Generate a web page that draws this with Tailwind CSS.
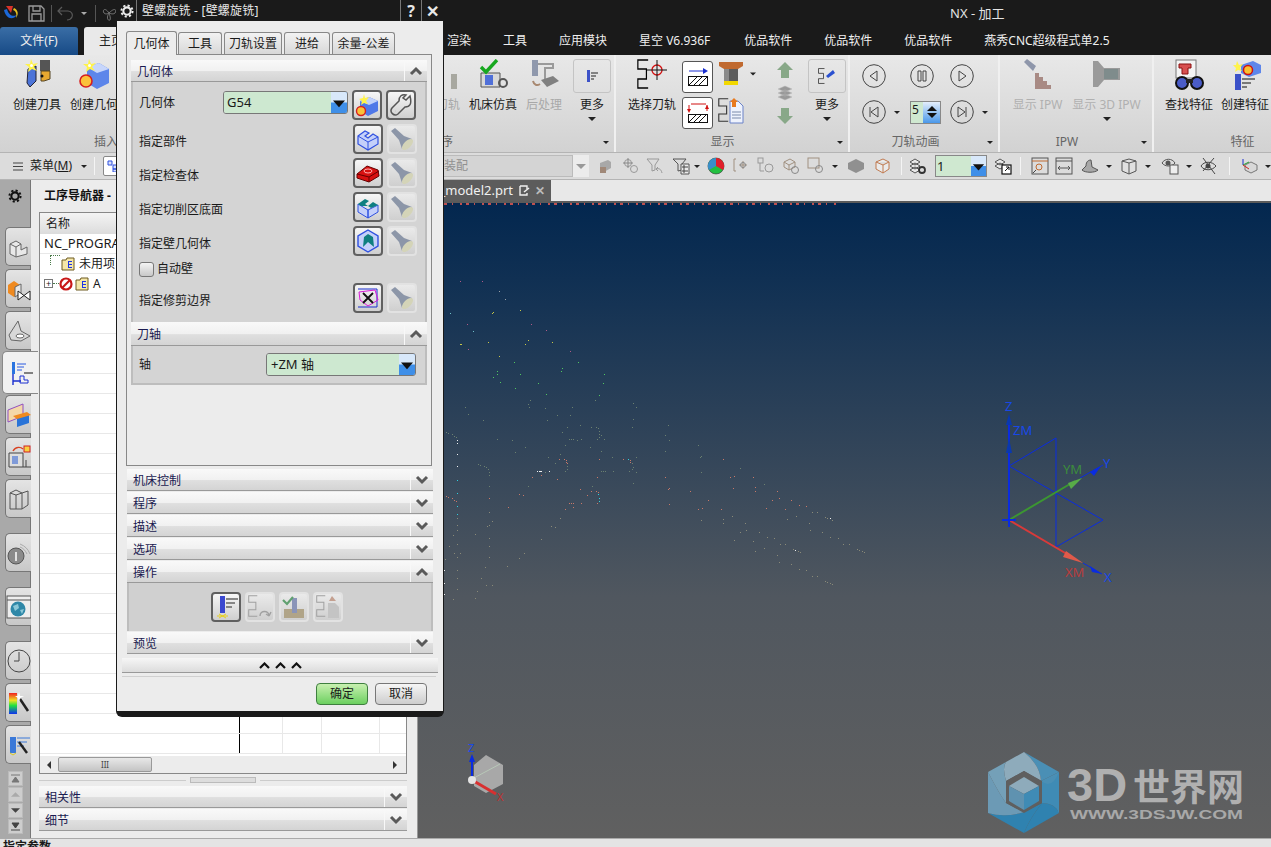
<!DOCTYPE html>
<html lang="zh">
<head>
<meta charset="UTF-8">
<title>NX - 加工</title>
<script src="https://cdn.jsdelivr.net/npm/@tailwindcss/browser@4"></script>
</head>
<body class="bg-[#1a1a1a] font-['Noto_Sans','Noto_Sans_CJK_SC',sans-serif] text-[12px] leading-none text-[#1a1a1a]">

<!-- shared icons -->
<svg class="hidden">
  <symbol id="torch" viewBox="0 0 24 24"><path d="M1 4L5 1L14 9L22 12L12 22L9 13Z" fill="#8c96a8"/><ellipse cx="17.500" cy="17.500" rx="7" ry="3.500" transform="rotate(-45 17.500 17.500)" fill="#d4d4b8"/></symbol>
  <symbol id="slot" viewBox="0 0 24 24"><path d="M2 9L9 4L13 6L9 9L12 11L17 7L22 10V17L12 23L2 17Z" fill="#c4d0fa" stroke="#2f50e0" stroke-width="1.2"/><path d="M2 9L12 15L22 10M12 15V23" fill="none" stroke="#2f50e0"/></symbol>
  <symbol id="slotg" viewBox="0 0 24 24"><path d="M2 9L12 15V23L2 17ZM12 15L22 10V17L12 23Z" fill="#c4d0fa" stroke="#2f50e0"/><path d="M2 9L9 4L13 6L9 9L12 11L5 11ZM12 11L17 7L22 10L15 13Z" fill="#0f7f80"/></symbol>
  <symbol id="wall" viewBox="0 0 24 24"><path d="M12 1L22 7V17L12 23L2 17V7Z" fill="#c4d0fa" stroke="#2f50e0" stroke-width="1.4"/><path d="M7 18L8 8L12 5L17 8L18 18L12 13Z" fill="#0f7f80"/></symbol>
  <symbol id="down" viewBox="0 0 16 22"><rect width="16" height="22" fill="#3f8fe8"/><rect width="16" height="11" fill="#d8e8fa"/><path d="M2 9H14L8 16Z" fill="#111"/></symbol>
  <symbol id="chevd" viewBox="0 0 14 10"><path d="M2 2L7 7L12 2" fill="none" stroke="#5a5a5a" stroke-width="3"/></symbol>
  <symbol id="chevu" viewBox="0 0 14 10"><path d="M2 8L7 3L12 8" fill="none" stroke="#5a5a5a" stroke-width="3"/></symbol>
  <symbol id="gear" viewBox="0 0 16 16"><circle cx="8" cy="8" r="4.2" fill="none" stroke="currentColor" stroke-width="2.4"/><circle cx="8" cy="8" r="6.4" fill="none" stroke="currentColor" stroke-width="2.2" stroke-dasharray="2.5 2.5"/></symbol>
  <symbol id="caret" viewBox="0 0 8 4"><path d="M0 0H8L4 4Z" fill="#222"/></symbol>
  <symbol id="folder" viewBox="0 0 14 14"><path d="M1 3H5L6 1H13V13H1Z" fill="#f4e6a8" stroke="#6d5a20"/><path d="M7 4H11V5H8V7H11V8H8V10H11V11H7Z" fill="#1b34e6"/></symbol>
  <symbol id="zigzag" viewBox="0 0 14 30" preserveAspectRatio="none"><path d="M13 1H1V10H11V20H1V29H13" fill="none" stroke="currentColor" stroke-width="1.4"/></symbol>
</svg>

<div class="relative flex h-[847px] w-[1271px] flex-col overflow-hidden">

  <!-- title bar -->
  <div class="flex h-[27px] shrink-0 items-center bg-[#1a1a1a]">
    <svg class="ml-[3px] size-[17px]" viewBox="0 0 17 17"><path d="M1 5C3 14 10 16 15 9C12 12 6 12 4 4Z" fill="#1c68d8"/><path d="M3 1L10 1L8 8Z" fill="#d8332a"/><path d="M11 3C15 5 16 9 13 13C14 9 13 6 10 5Z" fill="#e8c020"/></svg>
    <svg class="ml-[8px] size-[17px]" viewBox="0 0 17 17"><path d="M1 1H13L16 4V16H1ZM5 1V6H12V1M4 16V9H13V16" fill="none" stroke="#9a9a9a" stroke-width="1.3"/></svg>
    <div class="ml-[6px] h-[17px] w-px bg-[#555]"></div>
    <svg class="ml-[5px] size-[17px]" viewBox="0 0 17 17"><path d="M5 2L1 6L5 10M1 6H11C15 6 16 10 15 12C14 14 12 15 10 15" fill="none" stroke="#5a5a5a" stroke-width="1.2"/></svg>
    <svg class="ml-[7px] h-[3px] w-[6px]" viewBox="0 0 8 4"><path d="M0 0H8L4 4Z" fill="#aaa"/></svg>
    <div class="ml-[8px] h-[17px] w-px bg-[#555]"></div>
    <svg class="ml-[5px] size-[17px]" viewBox="0 0 17 17"><path d="M8 8C4 2 1 5 3 8C5 10 8 8 8 8C14 2 16 5 14 8C12 10 8 8 8 8C5 13 7 16 9 15C10 13 8 8 8 8" fill="none" stroke="#777"/></svg>
    <span class="ml-[832px] text-[13px] text-[#e4e4e4]">NX - 加工</span>
  </div>

  <!-- ribbon tabs -->
  <div class="flex h-[28px] shrink-0 items-center bg-[#1a1a1a] text-[#efefef]">
    <div class="flex h-full w-[78px] items-center justify-center rounded-t-[3px] bg-[linear-gradient(#3a6ea6,#174a86)]">文件(F)</div>
    <div class="ml-[6px] flex h-full w-[60px] items-center rounded-t-[3px] bg-[#e9e9e9] pl-[15px] text-[#222]">主页</div>
    <span class="ml-[303px]">渲染</span>
    <span class="ml-[32px]">工具</span>
    <span class="ml-[32px]">应用模块</span>
    <span class="ml-[32px]">星空 V6.936F</span>
    <span class="ml-[34px]">优品软件</span>
    <span class="ml-[32px]">优品软件</span>
    <span class="ml-[32px]">优品软件</span>
    <span class="ml-[32px]">燕秀CNC超级程式单2.5</span>
  </div>

  <!-- ribbon -->
  <div class="flex h-[97px] shrink-0 bg-[linear-gradient(#e8e8e8,#d2d2d2)]">
    <!-- insert / program group -->
    <div class="flex w-[616px] flex-col border-r-2 border-[#f0f0f0]">
      <div class="flex h-[77px]">
        <div class="ml-[13px] flex w-[48px] flex-col items-center pt-[4px]">
          <svg class="size-[30px]" viewBox="0 0 30 30"><path d="M6 10L14 7L14 22L8 28L5 24Z" fill="#4c74d8" stroke="#223"/><path d="M18 1H28V20H22V12H18Z" fill="#555"/><path d="M19 12H28V20L22 22H19Z" fill="#e8a830" stroke="#542"/><circle cx="20" cy="17" r="1.5" fill="#111"/><path d="M9 0L11 5L16 4L12 8L15 12L10 10L6 13L7 8L3 5L8 5Z" fill="#fff34a"/><circle cx="9.500" cy="6.500" r="1.500" fill="#fff"/></svg>
          <span class="mt-[10px] whitespace-nowrap">创建刀具</span>
        </div>
        <div class="ml-[9px] flex w-[48px] flex-col items-center pt-[4px]">
          <svg class="size-[30px]" viewBox="0 0 30 30"><path d="M8 8L20 4L30 10V24L18 30L8 24Z" fill="#5d86ea"/><path d="M8 8L20 4L30 10L18 14Z" fill="#c7d6fb"/><circle cx="7" cy="22" r="6" fill="#fbc23a" stroke="#d61f1f" stroke-width="1.6"/><path d="M10 0L12 5L17 4L13 8L16 12L11 10L7 13L8 8L4 5L9 5Z" fill="#fff34a"/><circle cx="10.500" cy="6.500" r="1.500" fill="#fff"/></svg>
          <span class="mt-[10px] whitespace-nowrap">创建几何</span>
        </div>
        <div class="ml-[294px] flex w-[48px] flex-col items-center pt-[4px] text-[#a8a8a8]">
          <svg class="size-[30px] overflow-visible" viewBox="0 0 30 30"><path d="M30 15H36V30H30Z" fill="#a8a8a0"/></svg>
          <span class="mt-[10px] whitespace-nowrap">确认刀轨</span>
        </div>
        <div class="ml-[9px] flex w-[48px] flex-col items-center pt-[4px]">
          <svg class="size-[30px]" viewBox="0 0 30 30"><path d="M3 14H22V28H3Z" fill="#d8d8d8" stroke="#555"/><path d="M7 16H15V26H7Z" fill="#4f6fd8"/><circle cx="25" cy="24" r="4" fill="none" stroke="#555" stroke-width="2"/><path d="M3 8L8 13L19 1" fill="none" stroke="#17a81f" stroke-width="3.4"/></svg>
          <span class="mt-[10px] whitespace-nowrap">机床仿真</span>
        </div>
        <div class="ml-[9px] flex w-[36px] flex-col items-center pt-[4px] text-[#a8a8a8]">
          <svg class="size-[30px]" viewBox="0 0 30 30"><path d="M3 1H9V17H3Z" fill="#8f98ac"/><path d="M9 5H24V9H16V22" fill="none" stroke="#9a9a9a" stroke-width="2"/><path d="M12 21L24 17L30 22L18 28Z" fill="#808080"/><path d="M4 22C5 26 8 27 11 25" fill="none" stroke="#a88870" stroke-width="2"/></svg>
          <span class="mt-[10px] whitespace-nowrap">后处理</span>
        </div>
        <div class="ml-[11px] flex w-[38px] flex-col items-center pt-[4px]">
          <div class="flex h-[34px] w-[38px] items-center justify-center rounded-[3px] border border-[#c4c4c4]">
            <svg class="size-[16px]" viewBox="0 0 16 16"><path d="M3 2H6V14H3Z" fill="#3d52c8"/><path d="M7 5H14M7 8H12M7 11H10" stroke="#222" stroke-width="1.2"/></svg>
          </div>
          <span class="mt-[6px]">更多</span>
          <svg class="mt-[6px] h-[4px] w-[8px]"><use href="#caret"/></svg>
        </div>
      </div>
      <div class="relative flex h-[20px] items-center text-[#666]">
        <span class="ml-[94px]">插入</span>
        <span class="ml-[323px]">序</span>
        <svg class="absolute right-[5px] h-[3px] w-[6px]"><use href="#caret"/></svg>
      </div>
    </div>
    <!-- display group -->
    <div class="relative flex w-[234px] flex-col border-r-2 border-[#f0f0f0]">
      <div class="flex h-[77px]">
        <div class="ml-[12px] flex w-[48px] flex-col items-center pt-[4px]">
          <svg class="size-[30px] text-black" viewBox="0 0 30 30"><use href="#zigzag" width="12" height="30"/><circle cx="20" cy="11" r="5" fill="none" stroke="#d21010" stroke-width="1.3"/><path d="M10 11H30M20 1V21" stroke="#111"/></svg>
          <span class="mt-[10px] whitespace-nowrap">选择刀轨</span>
        </div>
        <div class="ml-[6px] flex flex-col gap-[4px] pt-[6px]">
          <div class="flex h-[32px] w-[31px] items-center justify-center rounded-[3px] border border-[#555] bg-white">
            <svg class="size-[24px]" viewBox="0 0 24 24"><path d="M3 6H19" stroke="#1a2fd0"/><path d="M17 3L22 6L17 9Z" fill="#1a2fd0"/><rect x="2.5" y="11.5" width="19" height="9" fill="none" stroke="#111"/><path d="M3 20L11 12M8 20L16 12M13 20L21 12" stroke="#111"/></svg>
          </div>
          <div class="flex h-[32px] w-[31px] items-center justify-center rounded-[3px] border border-[#555] bg-white">
            <svg class="size-[24px]" viewBox="0 0 24 24"><path d="M5 3H20M3 4V10M21 4V10" stroke="#d01010"/><path d="M1 8H5L3 12ZM19 8H23L21 4Z" fill="#d01010"/><rect x="2.5" y="13.5" width="19" height="8" fill="none" stroke="#111"/><path d="M3 21L10 14M8 21L15 14M13 21L20 14" stroke="#111"/></svg>
          </div>
        </div>
        <div class="ml-[5px] flex flex-col pt-[6px]">
          <div class="flex items-center">
            <svg class="size-[26px]" viewBox="0 0 26 26"><path d="M1 1H25V5L20 8H6L1 5Z" fill="#c06a30"/><path d="M6 8H20V20H6Z" fill="#5c5c5c"/><path d="M6 8H11V20H6Z" fill="#8a8a8a"/><rect x="6" y="20" width="14" height="4" fill="#f2d800"/></svg>
            <svg class="ml-[6px] h-[4px] w-[6px]"><use href="#caret"/></svg>
          </div>
          <svg class="mt-[11px] size-[26px] text-[#333]" viewBox="0 0 26 26"><use href="#zigzag" width="11" height="24"/><path d="M12 3H20L25 8V25H12Z" fill="#eef2fc" stroke="#6a82c8"/><path d="M14 14H23M14 17H23M14 20H23" stroke="#7a8aaa"/><path d="M16 0L20 4H18V9H14V4H12Z" fill="#e87a20"/></svg>
        </div>
        <div class="ml-[17px] flex w-[24px] flex-col items-center pt-[6px]">
          <svg class="size-[18px]" viewBox="0 0 18 18"><path d="M9 1L17 9H13V17H5V9H1Z" fill="#88a888"/></svg>
          <svg class="mt-[5px] size-[18px]" viewBox="0 0 18 18"><path d="M2 5L9 2L16 5L9 8ZM2 9L9 6L16 9L9 12ZM2 13L9 10L16 13L9 16Z" fill="#999" stroke="#bbb" stroke-width=".5"/></svg>
          <svg class="mt-[5px] size-[18px]" viewBox="0 0 18 18"><path d="M5 1H13V9H17L9 17L1 9H5Z" fill="#88a888"/></svg>
        </div>
        <div class="ml-[11px] flex w-[38px] flex-col items-center pt-[4px]">
          <div class="flex h-[34px] w-[38px] items-center justify-center rounded-[3px] border border-[#c4c4c4]">
            <svg class="size-[18px] text-[#222]" viewBox="0 0 18 18"><use href="#zigzag" width="7" height="16" y="1"/><path d="M8 9L15 3L17 6L10 11Z" fill="#2a50d0"/></svg>
          </div>
          <span class="mt-[6px]">更多</span>
          <svg class="mt-[6px] h-[4px] w-[8px]"><use href="#caret"/></svg>
        </div>
      </div>
      <div class="relative flex h-[20px] items-center justify-center pr-[19px] text-[#666]">
        显示
        <svg class="absolute right-[5px] h-[3px] w-[6px]"><use href="#caret"/></svg>
      </div>
    </div>
    <!-- animation group -->
    <div class="relative flex w-[150px] flex-col border-r-2 border-[#f0f0f0]">
      <div class="flex h-[77px] flex-col gap-[12px] pt-[9px]">
        <div class="flex items-center">
          <svg class="ml-[12px] size-[24px]" viewBox="0 0 24 24"><circle cx="12" cy="12" r="11.3" fill="none" stroke="#444"/><path d="M15 7L8 12L15 17Z" fill="none" stroke="#444"/></svg>
          <svg class="ml-[24px] size-[24px]" viewBox="0 0 24 24"><circle cx="12" cy="12" r="11.3" fill="none" stroke="#444"/><path d="M8 7H11V17H8ZM13 7H16V17H13Z" fill="none" stroke="#444"/></svg>
          <svg class="ml-[16px] size-[24px]" viewBox="0 0 24 24"><circle cx="12" cy="12" r="11.3" fill="none" stroke="#444"/><path d="M9 7L16 12L9 17Z" fill="none" stroke="#444"/></svg>
        </div>
        <div class="flex items-center">
          <svg class="ml-[12px] size-[24px]" viewBox="0 0 24 24"><circle cx="12" cy="12" r="11.3" fill="none" stroke="#444"/><path d="M16 7L9 12L16 17ZM8 7V17" fill="none" stroke="#444"/></svg>
          <svg class="ml-[8px] h-[3px] w-[6px]"><use href="#caret"/></svg>
          <div class="ml-[10px] flex h-[23px] w-[31px] border border-[#888]">
            <span class="flex w-[12px] items-center bg-[#cfe8d0] pl-[1px] pb-[4px]">5</span>
            <div class="flex flex-1 flex-col items-center justify-center gap-[2px] bg-[linear-gradient(#e4eefb,#4a98ea)]">
              <svg class="h-[5px] w-[10px]" viewBox="0 0 8 4"><path d="M0 4H8L4 0Z" fill="#111"/></svg>
              <svg class="h-[5px] w-[10px]" viewBox="0 0 8 4"><path d="M0 0H8L4 4Z" fill="#111"/></svg>
            </div>
          </div>
          <svg class="ml-[9px] size-[24px]" viewBox="0 0 24 24"><circle cx="12" cy="12" r="11.3" fill="none" stroke="#444"/><path d="M8 7L15 12L8 17ZM16 7V17" fill="none" stroke="#444"/></svg>
          <svg class="ml-[8px] h-[3px] w-[6px]"><use href="#caret"/></svg>
        </div>
      </div>
      <div class="relative flex h-[20px] items-center justify-center pr-[17px] text-[#666]">
        刀轨动画
        <svg class="absolute right-[5px] h-[3px] w-[6px]"><use href="#caret"/></svg>
      </div>
    </div>
    <!-- ipw group -->
    <div class="relative flex w-[154px] flex-col border-r-2 border-[#f0f0f0]">
      <div class="flex h-[77px] text-[#b0b0b0]">
        <div class="ml-[12px] flex w-[51px] flex-col items-center pt-[4px]">
          <svg class="size-[30px]" viewBox="0 0 30 30"><path d="M1 3L4 0L13 7L10 12Z" fill="#8e96aa"/><path d="M12 14H16V18H20V22H24V26H28V30H12Z" fill="#a88a84"/></svg>
          <span class="mt-[10px] whitespace-nowrap">显示 IPW</span>
        </div>
        <div class="ml-[8px] flex w-[71px] flex-col items-center pt-[4px]">
          <svg class="size-[30px]" viewBox="0 0 30 30"><path d="M1 2H6L12 9H28V21H12L6 28H1Z" fill="#9a9a9a"/><path d="M12 10H26V20H12Z" fill="#7f8c8c"/></svg>
          <span class="mt-[10px] whitespace-nowrap">显示 3D IPW</span>
          <svg class="mt-[6px] h-[4px] w-[8px]"><use href="#caret"/></svg>
        </div>
      </div>
      <div class="relative flex h-[20px] items-center justify-center pr-[18px] text-[#666]">
        IPW
        <svg class="absolute right-[5px] h-[3px] w-[6px]"><use href="#caret"/></svg>
      </div>
    </div>
    <!-- feature group -->
    <div class="flex flex-1 flex-col">
      <div class="flex h-[77px]">
        <div class="ml-[11px] flex w-[48px] flex-col items-center pt-[4px]">
          <svg class="size-[32px]" viewBox="0 0 32 32"><rect x="3" y="1" width="20" height="18" fill="#f4f4f4" stroke="#777"/><path d="M6 5H18V9H15V15H9V9H6Z" fill="#d85050" stroke="#8a1010"/><circle cx="9" cy="24" r="6" fill="#4a5cc8" stroke="#111" stroke-width="2"/><circle cx="24" cy="24" r="6" fill="#4a5cc8" stroke="#111" stroke-width="2"/><path d="M13 20H20V24H13Z" fill="#222"/></svg>
          <span class="mt-[8px] whitespace-nowrap">查找特征</span>
        </div>
        <div class="ml-[8px] flex w-[48px] flex-col items-center pt-[4px]">
          <svg class="size-[32px]" viewBox="0 0 32 32"><path d="M12 6L24 2L32 6V14L20 18L12 14Z" fill="#5d86ea"/><circle cx="19" cy="11" r="4.5" fill="#f8c030" stroke="#d01010" stroke-width="1.5"/><path d="M8 2L10 6L14 5L11 9L13 12L9 11L6 13L7 9L4 6L7 6Z" fill="#fff34a"/><path d="M6 15H12V31H6Z" fill="#3a50c8"/><path d="M13 20H26M13 24H22M13 28H18" stroke="#555" stroke-width="1.3"/></svg>
          <span class="mt-[8px] whitespace-nowrap">创建特征</span>
        </div>
      </div>
      <div class="flex h-[20px] items-center justify-center pl-[60px] text-[#666]">特征</div>
    </div>
  </div>

  <!-- selection toolbar -->
  <div class="flex h-[28px] shrink-0 items-center border-y border-[#b4b4b4] bg-[#dcdcdc]">
    <svg class="ml-[13px] h-[9px] w-[10px]" viewBox="0 0 10 9"><path d="M0 1H10M0 4.500H10M0 8H10" stroke="#444"/></svg>
    <span class="ml-[7px] w-[44px] whitespace-nowrap">菜单(<u>M</u>)</span>
    <svg class="ml-[7px] h-[3px] w-[6px]"><use href="#caret"/></svg>
    <div class="ml-[7px] h-[18px] w-px bg-[#f4f4f4]"></div>
    <div class="ml-[8px] flex size-[20px] items-center justify-center rounded-[2px] border border-[#888] bg-white"><svg class="size-[12px]" viewBox="0 0 12 12"><path d="M1 1H5V5H1ZM6 5H10V9H6ZM6 9H10V12H6Z" fill="#d8e0fa" stroke="#2f50e0"/></svg></div>
    <div class="ml-[227px] flex h-[22px] w-[223px] items-center justify-end border border-[#bbb] bg-[#d4d4d4] pr-[104px] text-[#909090]">装配</div>
    <div class="flex h-[22px] w-[16px] items-center justify-center bg-[#ececec]"><svg class="h-[5px] w-[10px]" viewBox="0 0 8 4"><path d="M0 0H8L4 4Z" fill="#999"/></svg></div>
    <svg class="ml-[8px] size-[16px]" viewBox="0 0 16 16"><path d="M3 5L11 2L14 4V10L7 14H3Z" fill="#a8a8a8"/><path d="M3 9H9V15H3Z" fill="#a08878"/></svg>
    <svg class="ml-[9px] size-[18px]" viewBox="0 0 18 18"><circle cx="6" cy="6" r="3.500" fill="none" stroke="#999"/><circle cx="12" cy="12" r="3.500" fill="none" stroke="#999"/><path d="M6 1V11M1 6H11" stroke="#888"/></svg>
    <svg class="ml-[6px] size-[18px]" viewBox="0 0 18 18"><path d="M1 2H13L9 8V13L6 14V8Z" fill="none" stroke="#999"/><path d="M16 16C15 12 13 11 10 12M12 10L10 12L12 14" fill="none" stroke="#999"/></svg>
    <svg class="ml-[8px] size-[18px]" viewBox="0 0 18 18"><path d="M1 2H14L10 7V13L6 14V7Z" fill="none" stroke="#555"/><path d="M9 7H17V17H9Z" fill="#ececec" stroke="#555"/><path d="M11 9H13V11H11ZM14 10H16M11 13H13V15H11ZM14 14H16" stroke="#444" fill="none"/></svg>
    <svg class="ml-[4px] h-[3px] w-[6px]"><use href="#caret"/></svg>
    <svg class="ml-[7px] size-[18px]" viewBox="0 0 18 18"><circle cx="9" cy="9" r="8" fill="#22c040" stroke="#333" stroke-width=".6"/><path d="M9 9V1A8 8 0 0 1 16 13Z" fill="#e01f2a"/><path d="M9 9V1A8 8 0 0 0 2 13Z" fill="#3a8fc8"/></svg>
    <svg class="ml-[8px] size-[18px]" viewBox="0 0 18 18"><path d="M3 2H1V14H3M6 8H14M10 4V12" stroke="#a09080" fill="none"/><circle cx="10" cy="8" r="2.500" fill="none" stroke="#888"/></svg>
    <svg class="ml-[6px] size-[18px]" viewBox="0 0 18 18"><rect x="1" y="1" width="5" height="5" fill="none" stroke="#999"/><path d="M3 6V14H7" fill="none" stroke="#999"/><circle cx="12" cy="11" r="4" fill="none" stroke="#999"/></svg>
    <svg class="ml-[8px] size-[18px]" viewBox="0 0 18 18"><path d="M1 5L7 2L12 5V10L6 13L1 10ZM1 5L6 8L12 5M6 8V13" fill="none" stroke="#a09080"/><circle cx="12" cy="13" r="3.500" fill="none" stroke="#888"/></svg>
    <svg class="ml-[6px] size-[18px]" viewBox="0 0 18 18"><rect x="1" y="1" width="11" height="10" fill="none" stroke="#a09080"/><circle cx="12" cy="12" r="3.500" fill="none" stroke="#888"/></svg>
    <svg class="ml-[7px] h-[3px] w-[6px]"><use href="#caret"/></svg>
    <svg class="ml-[9px] size-[18px]" viewBox="0 0 18 18"><path d="M1 6L9 2L17 6V12L9 16L1 12Z" fill="#909090"/></svg>
    <svg class="ml-[9px] size-[18px]" viewBox="0 0 18 18"><path d="M2 5L9 2L15 5V12L9 16L2 12ZM2 5L9 8L15 5M9 8V16" fill="#eaeaea" stroke="#c07a50"/></svg>
    <div class="ml-[9px] h-[18px] w-px bg-[#f4f4f4]"></div>
    <svg class="ml-[7px] size-[18px]" viewBox="0 0 18 18"><path d="M1 5L6 2L11 5L6 8ZM1 9L6 6L11 9L6 12ZM1 13L6 10L11 13L6 16Z" fill="#e8e8e8" stroke="#555"/><circle cx="13" cy="13" r="3" fill="none" stroke="#333" stroke-width="1.800"/></svg>
    <div class="ml-[8px] flex h-[22px] w-[52px] items-center border border-[#888]">
      <span class="flex h-full w-[35px] items-center bg-[#cfe8d0] pl-[1px] text-[13px]">1</span>
      <svg class="h-full w-[15px]" viewBox="0 0 16 22" preserveAspectRatio="none"><use href="#down"/></svg>
    </div>
    <svg class="ml-[7px] size-[18px]" viewBox="0 0 18 18"><path d="M1 5L6 2L11 5L6 8ZM1 9L6 6L11 9L6 12Z" fill="#e8e8e8" stroke="#555"/><rect x="8" y="8" width="9" height="9" fill="#fff" stroke="#111" stroke-width="1.200"/><path d="M11 14L15 10M12 10H15V13" fill="none" stroke="#111"/></svg>
    <div class="ml-[8px] h-[18px] w-px bg-[#f4f4f4]"></div>
    <svg class="ml-[10px] size-[18px]" viewBox="0 0 18 18"><rect x="1" y="1" width="16" height="16" fill="none" stroke="#555"/><path d="M1 4H17" stroke="#c06a30"/><circle cx="8" cy="10" r="3" fill="none" stroke="#c06a30"/><path d="M5 13L2 16" stroke="#444"/></svg>
    <svg class="ml-[6px] size-[18px]" viewBox="0 0 18 18"><rect x="1" y="1" width="16" height="16" fill="none" stroke="#555"/><path d="M1 4H17M3 11H15M3 11L5 9M3 11L5 13M15 11L13 9M15 11L13 13" fill="none" stroke="#555"/></svg>
    <svg class="ml-[8px] size-[18px]" viewBox="0 0 18 18"><path d="M5 9C5 4 8 3 10 3L11 10L17 13C14 16 4 16 1 13Z" fill="#a8a8a8" stroke="#555"/></svg>
    <svg class="ml-[7px] h-[3px] w-[6px]"><use href="#caret"/></svg>
    <svg class="ml-[8px] size-[18px]" viewBox="0 0 18 18"><path d="M2 4L9 2L16 4V14L9 17L2 14Z" fill="#e0e0e0" stroke="#555"/><path d="M2 4L9 6L16 4M9 6V17" fill="none" stroke="#555"/></svg>
    <svg class="ml-[7px] h-[3px] w-[6px]"><use href="#caret"/></svg>
    <svg class="ml-[10px] size-[18px]" viewBox="0 0 18 18"><path d="M1 6C4 1 11 1 14 6C11 10 4 10 1 6Z" fill="none" stroke="#555"/><circle cx="7" cy="6" r="2.500" fill="#555"/><rect x="9" y="8" width="8" height="9" fill="#eee" stroke="#555"/></svg>
    <svg class="ml-[7px] h-[3px] w-[6px]"><use href="#caret"/></svg>
    <svg class="ml-[8px] size-[18px]" viewBox="0 0 18 18"><path d="M1 9C4 4 12 4 16 9C12 14 4 14 1 9Z" fill="none" stroke="#444"/><circle cx="8" cy="9" r="2.500" fill="#444"/><path d="M3 1L15 17M14 1L3 14" stroke="#444"/></svg>
    <div class="ml-[11px] h-[18px] w-px bg-[#f4f4f4]"></div>
    <svg class="ml-[10px] size-[18px]" viewBox="0 0 18 18"><path d="M5 8L11 5L17 8V13L11 16L5 13Z" fill="#d8d8d8" stroke="#777"/><path d="M3 2V8" stroke="#1a2fd0"/><path d="M3 8L9 5" stroke="#20a030"/><path d="M3 8L9 12" stroke="#d02020"/></svg>
    <svg class="ml-[7px] h-[3px] w-[6px]"><use href="#caret"/></svg>
  </div>

  <!-- main area -->
  <div class="flex min-h-0 flex-1">
    <!-- resource bar -->
    <div class="flex w-[31px] shrink-0 flex-col border-r border-[#777] bg-[#a9a9a9]">
      <div class="flex h-[47px] shrink-0 items-start justify-center pt-[9px]"><svg class="size-[14px] text-[#111]"><use href="#gear"/></svg></div>
      <div class="ml-[5px] flex h-[39px] w-[26px] items-center justify-center rounded-l-[5px] border border-r-0 border-[#777] bg-[linear-gradient(#e4e4e4,#c8c8c8)]">
        <svg class="size-[22px]" viewBox="0 0 22 22"><path d="M2 8L8 5L13 8V14L19 11V18L8 21L2 18Z" fill="#e8e8e8" stroke="#666"/><path d="M2 8L8 11L13 8M8 11V21" fill="none" stroke="#666"/></svg>
      </div>
      <div class="ml-[5px] mt-[3px] flex h-[39px] w-[26px] items-center justify-center rounded-l-[5px] border border-r-0 border-[#777] bg-[linear-gradient(#e4e4e4,#c8c8c8)]">
        <svg class="size-[24px]" viewBox="0 0 24 24"><path d="M1 8L7 4L13 8V16L7 20L1 16Z" fill="#ef8a20"/><path d="M8 10L14 7V16L8 20Z" fill="#e8e8e8" stroke="#666"/><path d="M11 14L23 23V14L11 23Z" fill="#fff" stroke="#222"/></svg>
      </div>
      <div class="ml-[5px] mt-[3px] flex h-[39px] w-[26px] items-center justify-center rounded-l-[5px] border border-r-0 border-[#777] bg-[linear-gradient(#e4e4e4,#c8c8c8)]">
        <svg class="size-[24px]" viewBox="0 0 24 24"><path d="M2 16L11 2L14 12L23 17L14 22L4 21Z" fill="#d8d8d8" stroke="#666"/><ellipse cx="13" cy="17" rx="4" ry="2" fill="#fff" stroke="#666"/></svg>
      </div>
      <div class="relative z-10 ml-[2px] mt-[1px] flex h-[43px] w-[36px] shrink-0 items-center justify-center rounded-l-[5px] border border-r-0 border-[#888] bg-[#f1f1f1]">
        <svg class="size-[24px]" viewBox="0 0 24 24"><path d="M3 1H6V13H3Z" fill="#2a74e0"/><path d="M8 3H17M8 6H15M8 9H13" stroke="#2a5ae0"/><path d="M15 12H24" stroke="#111"/><path d="M4 13V24M4 20H12" stroke="#1a2fd0" stroke-width="1.400"/><path d="M11 15H15V19H19V22H11Z" fill="none" stroke="#1a2fd0"/></svg>
      </div>
      <div class="ml-[5px] mt-[1px] flex h-[39px] w-[26px] items-center justify-center rounded-l-[5px] border border-r-0 border-[#777] bg-[linear-gradient(#e4e4e4,#c8c8c8)]">
        <svg class="size-[24px]" viewBox="0 0 24 24"><path d="M1 7L16 1V13L1 19Z" fill="#f4d8a8" stroke="#9050c0"/><path d="M10 15L22 12V20L10 24Z" fill="#2a74d8"/><path d="M6 13L20 9L24 12L10 16Z" fill="#ef8a20"/></svg>
      </div>
      <div class="ml-[5px] mt-[3px] flex h-[39px] w-[26px] items-center justify-center rounded-l-[5px] border border-r-0 border-[#777] bg-[linear-gradient(#e4e4e4,#c8c8c8)]">
        <svg class="size-[24px]" viewBox="0 0 24 24"><path d="M2 8H16V22H2Z" fill="#ddd" stroke="#444"/><path d="M5 11H11V19H5Z" fill="#7f9ad8"/><path d="M19 15V22M16 22H24" stroke="#444"/><path d="M6 6C9 1 14 2 16 4" fill="none" stroke="#d84020" stroke-width="1.400"/><rect x="17" y="1" width="6" height="6" fill="#f8d040" stroke="#d02020"/></svg>
      </div>
      <div class="ml-[5px] mt-[3px] flex h-[39px] w-[26px] items-center justify-center rounded-l-[5px] border border-r-0 border-[#777] bg-[linear-gradient(#e4e4e4,#c8c8c8)]">
        <svg class="size-[24px]" viewBox="0 0 24 24"><path d="M3 6L9 3L15 6V22H3ZM9 8V22M3 6L9 8L15 6M15 6L21 4V18L15 22" fill="none" stroke="#555"/></svg>
      </div>
      <div class="ml-[5px] mt-[15px] flex h-[39px] w-[26px] items-center justify-center rounded-l-[5px] border border-r-0 border-[#777] bg-[linear-gradient(#e4e4e4,#c8c8c8)]">
        <svg class="size-[24px]" viewBox="0 0 24 24"><circle cx="9" cy="15" r="8" fill="#8a8a8a" stroke="#555"/><path d="M9 11V20" stroke="#fff" stroke-width="1.500"/><path d="M13 3C18 5 21 8 23 13M13 6C16 7 18 9 20 13" fill="none" stroke="#aaa"/></svg>
      </div>
      <div class="ml-[5px] mt-[15px] flex h-[39px] w-[26px] items-center justify-center rounded-l-[5px] border border-r-0 border-[#777] bg-[linear-gradient(#e4e4e4,#c8c8c8)]">
        <svg class="size-[25px]" viewBox="0 0 25 25"><rect x="1" y="2" width="24" height="22" fill="#eee" stroke="#555"/><path d="M1 6H25" stroke="#555"/><circle cx="12" cy="15" r="7.500" fill="#2f88a8"/><path d="M7 12L12 10L13 14L9 17ZM14 16L18 15L16 20Z" fill="#8cc8d8"/></svg>
      </div>
      <div class="ml-[5px] mt-[15px] flex h-[39px] w-[26px] items-center justify-center rounded-l-[5px] border border-r-0 border-[#777] bg-[linear-gradient(#e4e4e4,#c8c8c8)]">
        <svg class="size-[24px]" viewBox="0 0 24 24"><circle cx="12" cy="12" r="11" fill="none" stroke="#444"/><path d="M12 3V12H7" fill="none" stroke="#444"/></svg>
      </div>
      <div class="ml-[5px] mt-[3px] flex h-[39px] w-[26px] items-center justify-center rounded-l-[5px] border border-r-0 border-[#777] bg-[linear-gradient(#e4e4e4,#c8c8c8)]">
        <svg class="size-[24px]" viewBox="0 0 24 24"><defs><linearGradient id="rb" x1="0" y1="0" x2="0" y2="1"><stop offset="0" stop-color="#f02020"/><stop offset=".35" stop-color="#f0e020"/><stop offset=".6" stop-color="#20e040"/><stop offset="1" stop-color="#1030f0"/></linearGradient></defs><rect x="2" y="2" width="8" height="21" fill="url(#rb)"/><path d="M13 8L21 20" stroke="#222" stroke-width="2.500"/><path d="M12 1L13 5L17 5L13 7L12 11L11 7L8 5L11 5Z" fill="#fff"/></svg>
      </div>
      <div class="ml-[5px] mt-[3px] flex h-[39px] w-[26px] items-center justify-center rounded-l-[5px] border border-r-0 border-[#777] bg-[linear-gradient(#e4e4e4,#c8c8c8)]">
        <svg class="size-[24px]" viewBox="0 0 24 24"><path d="M3 4H9V20H3Z" fill="#3a78d8"/><path d="M10 5H23M10 9H20M10 13H17" stroke="#3a78d8"/><path d="M12 9L20 20" stroke="#222" stroke-width="2.400"/><path d="M3 20L6 22L9 20" stroke="#d8c820" fill="none"/></svg>
      </div>
      <div class="ml-[8px] mt-[7px] flex flex-col gap-px">
        <div class="flex size-[15px] items-center justify-center border border-[#bbb] bg-[#cdcdcd]"><svg class="h-[9px] w-[9px]" viewBox="0 0 9 9"><path d="M0 1H9M1 8L4.500 3L8 8Z" fill="#777" stroke="#777"/></svg></div>
        <div class="flex size-[15px] items-center justify-center border border-[#bbb] bg-[#cdcdcd]"><svg class="h-[5px] w-[9px]" viewBox="0 0 8 4"><path d="M0 4H8L4 0Z" fill="#aaa"/></svg></div>
        <div class="flex size-[15px] items-center justify-center border border-[#bbb] bg-[#cdcdcd]"><svg class="h-[5px] w-[9px]" viewBox="0 0 8 4"><path d="M0 0H8L4 4Z" fill="#444"/></svg></div>
        <div class="flex size-[15px] items-center justify-center border border-[#bbb] bg-[#cdcdcd]"><svg class="h-[9px] w-[9px]" viewBox="0 0 9 9"><path d="M0 8H9M1 1L4.500 6L8 1Z" fill="#444" stroke="#444"/></svg></div>
      </div>
    </div>

    <!-- operation navigator -->
    <div class="flex w-[387px] shrink-0 flex-col border-r border-[#999] bg-[#ececec] pl-[8px] pr-[10px]">
      <div class="flex h-[32px] shrink-0 items-center pl-[5px] font-bold text-[#111]">工序导航器 -</div>
      <div class="flex h-[562px] shrink-0 flex-col border border-[#888] bg-white">
        <div class="flex h-[21px] shrink-0 items-center bg-[linear-gradient(#f4f4f4,#dcdcdc)] pl-[6px]">名称</div>
        <div id="rows" class="flex h-[522px] flex-col overflow-hidden"></div>
        <div class="flex flex-1 items-center bg-[#ececec]">
          <svg class="ml-[7px] h-[8px] w-[4px]" viewBox="0 0 4 8"><path d="M4 0V8L0 4Z" fill="#333"/></svg>
          <div class="ml-[7px] flex h-[15px] w-[94px] items-center justify-center rounded-[2px] border border-[#999] bg-[linear-gradient(#e8e8e8,#c4c4c4)] text-[8px] text-[#444]">III</div>
          <svg class="ml-[241px] h-[8px] w-[4px]" viewBox="0 0 4 8"><path d="M0 0V8L4 4Z" fill="#333"/></svg>
        </div>
      </div>
      <div class="flex h-[12px] shrink-0 items-center gap-[4px]">
        <div class="h-px w-[147px] bg-[#ccc]"></div>
        <div class="h-[6px] w-[66px] border border-[#bbb] bg-[#ddd]"></div>
        <div class="h-px flex-1 bg-[#ccc]"></div>
      </div>
      <div class="flex h-[22px] shrink-0 items-center border-b border-[#999] bg-[linear-gradient(#f9f9f9_0%,#f1f1f1_50%,#dfdfdf_55%,#d4d4d4_100%)] pl-[6px] text-[#1a1a50]">
        <span class="flex-1 pt-[2px]">相关性</span>
        <div class="flex h-full w-[23px] items-center justify-center border-l border-[#f8f8f8]"><svg class="h-[10px] w-[14px]"><use href="#chevd"/></svg></div>
      </div>
      <div class="mt-px flex h-[22px] shrink-0 items-center border-b border-[#999] bg-[linear-gradient(#f9f9f9_0%,#f1f1f1_50%,#dfdfdf_55%,#d4d4d4_100%)] pl-[6px] text-[#1a1a50]">
        <span class="flex-1 pt-[2px]">细节</span>
        <div class="flex h-full w-[23px] items-center justify-center border-l border-[#f8f8f8]"><svg class="h-[10px] w-[14px]"><use href="#chevd"/></svg></div>
      </div>
    </div>

    <!-- graphics window -->
    <div class="flex min-w-0 flex-1 flex-col">
      <div class="flex h-[23px] shrink-0 border-b-2 border-[#5a5a5a] bg-[#e8e8e8]">
        <div class="flex h-full w-[133px] items-center justify-end bg-[#5c5c5c] pr-[6px] text-[13px] text-[#f0f0f0]">
          <span class="whitespace-nowrap">_model2.prt</span>
          <svg class="ml-[6px] size-[11px]" viewBox="0 0 11 11"><path d="M1 1H8V4M8 8V10H1V1" fill="none" stroke="#eee" stroke-width="1.400"/><path d="M5 7L10 3" stroke="#eee" stroke-width="1.600"/></svg>
          <span class="ml-[5px] text-[12px] font-bold text-[#bbb]">✕</span>
        </div>
      </div>
      <div class="relative flex-1 overflow-hidden bg-[linear-gradient(#03274f_0%,#103053_12%,#50575f_62%,#606060_100%)]">
        <svg id="canvas" class="absolute inset-0" width="853" height="635" viewBox="418 203 853 635">
          <path d="M444 204H840" stroke="#c05050" stroke-width="2" stroke-dasharray="3 5 1 7 2 4"/>
          <!-- wcs triad -->
          <g stroke="#0a2ce0" fill="none">
            <path d="M1009 466L1056 438V547M1009 466L1103 520L1056 547"/>
            <path d="M1080 478L1103 465M1083 563L1102 574"/>
          </g>
          <path d="M1009 520V420" stroke="#0a2ce0" stroke-width="2"/>
          <path d="M1009 414L1012 425H1006ZM1009 438L1012 453H1006Z" fill="#0a38b0"/>
          <path d="M1009 520L1075 481" stroke="#3c9632" stroke-width="2"/>
          <path d="M1082 478L1068 483L1071 489Z" fill="#58ac48"/>
          <path d="M1090 472L1101 466L1094 476Z" fill="#0a2ce0"/>
          <path d="M1009 520L1072 557" stroke="#d83a3a" stroke-width="2"/>
          <path d="M1083 563L1066 551L1063 557Z" fill="#e05a4a"/>
          <path d="M1090 566L1102 574L1092 572Z" fill="#0a2ce0"/>
          <path d="M1002 520H1016M1009 513V527" stroke="#0a2ce0" stroke-width="2"/>
          <g font-family="'Noto Sans',sans-serif" font-size="13">
            <text x="1005" y="411" fill="#1848e8">Z</text>
            <text x="1013" y="435" fill="#1848e8">ZM</text>
            <text x="1063" y="474" fill="#3c8c3c">YM</text>
            <text x="1103" y="468" fill="#1848e8">Y</text>
            <text x="1065" y="577" fill="#b83c3c">XM</text>
            <text x="1104" y="582" fill="#1848e8">X</text>
          </g>
          <!-- view triad -->
          <path d="M486 755L503 765V784L486 793L474 786V765Z" fill="#a8a8a8"/>
          <path d="M472 779L500 764" stroke="#b8c8b8"/>
          <path d="M472 780V758" stroke="#0a2ce0" stroke-width="2"/>
          <path d="M472 754L475 762H469Z" fill="#0a2ce0"/>
          <path d="M472 780L496 794" stroke="#d83030" stroke-width="3"/>
          <circle cx="472" cy="780" r="4" fill="#e4e4e4"/>
          <text x="468" y="752" font-size="11" fill="#1848e8" font-family="'Noto Sans',sans-serif">Z</text>
          <text x="497" y="801" font-size="11" fill="#c03030" font-family="'Noto Sans',sans-serif">X</text>
          <!-- watermark logo -->
          <path d="M1024 752L1059 772L1041 781Q1040 765 1024 752Z" fill="#4a8fb5"/>
          <path d="M1024 752Q1040 765 1041 781L1024 771L1006 781Q1002 767 1006 762Z" fill="#8eabbb"/>
          <path d="M1059 772V813Q1052 790 1041 781Z" fill="#4a8fb5"/>
          <path d="M1059 813L1024 833Q1030 818 1042 803Q1055 803 1059 813Z" fill="#2f82b0"/>
          <path d="M1059 772Q1052 790 1041 781L1042 803Q1055 803 1059 813Z" fill="#3f8bb5"/>
          <path d="M1024 833L988 813Q1005 818 1024 812L1042 803Q1030 818 1024 833Z" fill="#2f82b0"/>
          <path d="M988 813V772Q1000 795 1006 803L1024 812Q1005 818 988 813Z" fill="#6c9ab5"/>
          <path d="M988 772L1024 752L1006 762Q1002 767 1006 781V803Q1000 795 988 772Z" fill="#74a0b8"/>
          <path d="M1024 771L1042 781V803L1024 813L1006 803V781Z" fill="#5f5f5f"/>
          <path d="M1024 777L1039 786L1024 794L1009 786Z" fill="#8eabbb"/>
          <path d="M1009 786L1024 794V810L1009 801Z" fill="#5f92b0"/>
          <path d="M1039 786V801L1024 810V794Z" fill="#3f8bb5"/>
          <text y="801" font-weight="700" fill="#b0b0b0" font-family="'Liberation Sans','Noto Sans CJK SC',sans-serif"><tspan x="1067" font-size="47">3D</tspan><tspan x="1133" font-size="37">世界网</tspan></text>
          <text x="1070" y="819" font-size="12" font-weight="700" textLength="173" lengthAdjust="spacingAndGlyphs" fill="#a8a8a8" font-family="'Liberation Sans',sans-serif">WWW.3DSJW.COM</text>
        </svg>
      </div>
    </div>
  </div>

  <!-- status bar -->
  <div class="h-[9px] shrink-0 border-t border-[#aaa] bg-[#e4e4e4] pl-[3px] pt-px text-[12px] font-bold leading-[14px]">指定参数</div>

  <!-- dialog -->
  <div class="absolute left-[116px] top-0 z-20 flex h-[717px] w-[328px] flex-col rounded-b-[6px] bg-[#1a1a1a] pb-[6px] pl-px pr-[1px]">
    <div class="flex h-[21px] shrink-0 items-center text-[#e8e8e8]">
      <div class="flex h-full w-[20px] items-center justify-center border-r border-[#777]"><svg class="size-[14px] text-[#eee]"><use href="#gear"/></svg></div>
      <span class="ml-[5px] flex-1 tracking-[0.2px]">壁螺旋铣 - [壁螺旋铣]</span>
      <div class="flex h-full w-[21px] items-center justify-center border-l border-[#777] text-[16px] font-bold">?</div>
      <div class="flex h-full w-[22px] items-center justify-center border-l border-[#777] text-[16px] font-bold">✕</div>
    </div>
    <div class="flex min-h-0 flex-1 flex-col bg-[#ececec] px-[5px]">
      <!-- dialog tabs -->
      <div class="ml-[4px] mt-[10px] flex h-[23px] shrink-0 items-end gap-px">
        <div class="relative z-10 -mb-px flex h-[24px] w-[51px] items-center justify-center rounded-t-[3px] border border-b-0 border-[#888] bg-[#ececec]">几何体</div>
        <div class="flex h-[22px] w-[44px] items-center justify-center rounded-t-[3px] border border-b-0 border-[#888] bg-[linear-gradient(#f2f2f2,#d8d8d8)]">工具</div>
        <div class="ml-px flex h-[22px] w-[58px] items-center justify-center rounded-t-[3px] border border-b-0 border-[#888] bg-[linear-gradient(#f2f2f2,#d8d8d8)]">刀轨设置</div>
        <div class="ml-px flex h-[22px] w-[46px] items-center justify-center rounded-t-[3px] border border-b-0 border-[#888] bg-[linear-gradient(#f2f2f2,#d8d8d8)]">进给</div>
        <div class="ml-px flex h-[22px] w-[63px] items-center justify-center rounded-t-[3px] border border-b-0 border-[#888] bg-[linear-gradient(#f2f2f2,#d8d8d8)]">余量-公差</div>
      </div>
      <!-- tab page -->
      <div class="ml-[4px] h-[412px] w-[306px] shrink-0 border border-[#888] px-[4px] pt-[5px]">
        <div class="flex h-[22px] items-center border-b border-[#999] bg-[linear-gradient(#f9f9f9_0%,#f1f1f1_50%,#dfdfdf_55%,#d4d4d4_100%)] pl-[6px] text-[#1a1a50]">
          <span class="flex-1 pt-[2px]">几何体</span>
          <div class="flex h-full w-[23px] items-center justify-center border-l border-[#f8f8f8]"><svg class="h-[10px] w-[14px]"><use href="#chevu"/></svg></div>
        </div>
        <div class="h-[240px] border-x-2 border-[#bdbdbd] bg-[#d4d4d4] pl-[6px] pr-[8px] pt-[8px]">
          <div class="flex h-[30px] items-center">
            <span class="w-[84px] pb-[5px]">几何体</span>
            <div class="mb-[5px] flex h-[23px] w-[125px] items-stretch overflow-hidden rounded-[3px] border border-[#777]">
              <span class="flex flex-1 items-center bg-[#cde8d0] pl-[3px] text-[13px]">G54</span>
              <svg class="h-full w-[16px]" viewBox="0 0 16 22" preserveAspectRatio="none"><use href="#down"/></svg>
            </div>
            <div class="ml-[4px] flex size-[30px] items-center justify-center rounded-[4px] border-2 border-[#606060] bg-[linear-gradient(#f6f6f6,#cfcfcf)]">
              <svg class="size-[24px]" viewBox="0 0 24 24"><path d="M5 8L14 4L23 8V18L13 23L5 18Z" fill="#4f78e8"/><path d="M5 8L14 12L23 8L14 4Z" fill="#c2d2fa"/><circle cx="6" cy="18" r="4.500" fill="#fbc23a" stroke="#d61f1f" stroke-width="1.400"/><path d="M9 1L10 5L14 4L11 8L13 11L9 10L6 12L7 8L4 6L8 5Z" fill="#fff34a"/></svg>
            </div>
            <div class="ml-[4px] flex size-[30px] items-center justify-center rounded-[4px] border-2 border-[#606060] bg-[linear-gradient(#f6f6f6,#cfcfcf)]">
              <svg class="size-[24px]" viewBox="0 0 24 24"><path d="M21 3L17 7L14 5L17 2C13 1 10 3 10 8L3 15C0 19 5 24 9 21L16 14C21 14 23 11 21 3ZM6 18H6.100" fill="none" stroke="#555" stroke-width="1.500"/></svg>
            </div>
          </div>
          <div class="mt-[4px] flex h-[30px] items-center justify-end gap-[4px]">
            <span class="mr-auto pt-[6px]">指定部件</span>
            <div class="flex size-[30px] items-center justify-center rounded-[4px] border-2 border-[#606060] bg-[linear-gradient(#f6f6f6,#cfcfcf)]"><svg class="size-[24px]"><use href="#slot"/></svg></div>
            <div class="flex size-[30px] items-center justify-center rounded-[4px] border-2 border-[#e2e2e2] bg-[linear-gradient(#eaeaea,#cfcfcf)]"><svg class="size-[24px]"><use href="#torch"/></svg></div>
          </div>
          <div class="mt-[4px] flex h-[30px] items-center justify-end gap-[4px]">
            <span class="mr-auto pt-[6px]">指定检查体</span>
            <div class="flex size-[30px] items-center justify-center rounded-[4px] border-2 border-[#606060] bg-[linear-gradient(#f6f6f6,#cfcfcf)]">
              <svg class="size-[24px]" viewBox="0 0 24 24"><path d="M1 13L11 5L22 9L23 15L13 21L1 17Z" fill="#d81010" stroke="#600"/><path d="M1 13L13 16L23 10M13 16V21" fill="none" stroke="#600"/><ellipse cx="12" cy="10" rx="4" ry="2" fill="none" stroke="#ffb0b0"/></svg>
            </div>
            <div class="flex size-[30px] items-center justify-center rounded-[4px] border-2 border-[#e2e2e2] bg-[linear-gradient(#eaeaea,#cfcfcf)]"><svg class="size-[24px]"><use href="#torch"/></svg></div>
          </div>
          <div class="mt-[4px] flex h-[30px] items-center justify-end gap-[4px]">
            <span class="mr-auto pt-[6px]">指定切削区底面</span>
            <div class="flex size-[30px] items-center justify-center rounded-[4px] border-2 border-[#606060] bg-[linear-gradient(#f6f6f6,#cfcfcf)]"><svg class="size-[24px]"><use href="#slotg"/></svg></div>
            <div class="flex size-[30px] items-center justify-center rounded-[4px] border-2 border-[#e2e2e2] bg-[linear-gradient(#eaeaea,#cfcfcf)]"><svg class="size-[24px]"><use href="#torch"/></svg></div>
          </div>
          <div class="mt-[4px] flex h-[30px] items-center justify-end gap-[4px]">
            <span class="mr-auto pt-[6px]">指定壁几何体</span>
            <div class="flex size-[30px] items-center justify-center rounded-[4px] border-2 border-[#606060] bg-[linear-gradient(#f6f6f6,#cfcfcf)]"><svg class="size-[24px]"><use href="#wall"/></svg></div>
            <div class="flex size-[30px] items-center justify-center rounded-[4px] border-2 border-[#e2e2e2] bg-[linear-gradient(#eaeaea,#cfcfcf)]"><svg class="size-[24px]"><use href="#torch"/></svg></div>
          </div>
          <div class="mt-[5px] flex h-[16px] items-center gap-[3px]">
            <div class="size-[15px] rounded-[3px] border border-[#777] bg-[linear-gradient(#f4f4f4,#c8c8c8)]"></div>
            <span>自动壁</span>
          </div>
          <div class="mt-[6px] flex h-[30px] items-center justify-end gap-[4px]">
            <span class="mr-auto pt-[6px]">指定修剪边界</span>
            <div class="flex size-[30px] items-center justify-center rounded-[4px] border-2 border-[#606060] bg-[linear-gradient(#f6f6f6,#cfcfcf)]">
              <svg class="size-[24px]" viewBox="0 0 24 24"><path d="M2 3H21V21H2" fill="none" stroke="#1a2fd0"/><path d="M3 6L19 4L22 14L12 20L4 14Z" fill="none" stroke="#d818d8"/><path d="M7 7L17 17M17 7L7 17" stroke="#111" stroke-width="1.800"/></svg>
            </div>
            <div class="flex size-[30px] items-center justify-center rounded-[4px] border-2 border-[#e2e2e2] bg-[linear-gradient(#eaeaea,#cfcfcf)]"><svg class="size-[24px]"><use href="#torch"/></svg></div>
          </div>
        </div>
        <div class="flex h-[24px] items-center border-b border-[#999] bg-[linear-gradient(#f9f9f9_0%,#f1f1f1_50%,#dfdfdf_55%,#d4d4d4_100%)] pl-[6px] text-[#1a1a50]">
          <span class="flex-1 pt-[2px]">刀轴</span>
          <div class="flex h-full w-[23px] items-center justify-center border-l border-[#f8f8f8]"><svg class="h-[10px] w-[14px]"><use href="#chevu"/></svg></div>
        </div>
        <div class="flex h-[39px] items-center border-x-2 border-b-2 border-[#bdbdbd] bg-[#d4d4d4] pl-[6px] pr-[8px]">
          <span class="w-[127px]">轴</span>
          <div class="flex h-[23px] w-[150px] items-stretch overflow-hidden rounded-[3px] border border-[#777]">
            <span class="flex flex-1 items-center bg-[#cde8d0] pl-[4px] text-[13px]">+ZM 轴</span>
            <svg class="h-full w-[16px]" viewBox="0 0 16 22" preserveAspectRatio="none"><use href="#down"/></svg>
          </div>
        </div>
      </div>
      <!-- collapsed groups -->
      <div class="ml-[5px] mt-[3px] flex h-[22px] w-[306px] shrink-0 items-center border-b border-[#999] bg-[linear-gradient(#f9f9f9_0%,#f1f1f1_50%,#dfdfdf_55%,#d4d4d4_100%)] pl-[6px] text-[#1a1a50]">
        <span class="flex-1 pt-[2px]">机床控制</span>
        <div class="flex h-full w-[23px] items-center justify-center border-l border-[#f8f8f8]"><svg class="h-[10px] w-[14px]"><use href="#chevd"/></svg></div>
      </div>
      <div class="ml-[5px] mt-px flex h-[22px] w-[306px] shrink-0 items-center border-b border-[#999] bg-[linear-gradient(#f9f9f9_0%,#f1f1f1_50%,#dfdfdf_55%,#d4d4d4_100%)] pl-[6px] text-[#1a1a50]">
        <span class="flex-1 pt-[2px]">程序</span>
        <div class="flex h-full w-[23px] items-center justify-center border-l border-[#f8f8f8]"><svg class="h-[10px] w-[14px]"><use href="#chevd"/></svg></div>
      </div>
      <div class="ml-[5px] mt-px flex h-[22px] w-[306px] shrink-0 items-center border-b border-[#999] bg-[linear-gradient(#f9f9f9_0%,#f1f1f1_50%,#dfdfdf_55%,#d4d4d4_100%)] pl-[6px] text-[#1a1a50]">
        <span class="flex-1 pt-[2px]">描述</span>
        <div class="flex h-full w-[23px] items-center justify-center border-l border-[#f8f8f8]"><svg class="h-[10px] w-[14px]"><use href="#chevd"/></svg></div>
      </div>
      <div class="ml-[5px] mt-px flex h-[22px] w-[306px] shrink-0 items-center border-b border-[#999] bg-[linear-gradient(#f9f9f9_0%,#f1f1f1_50%,#dfdfdf_55%,#d4d4d4_100%)] pl-[6px] text-[#1a1a50]">
        <span class="flex-1 pt-[2px]">选项</span>
        <div class="flex h-full w-[23px] items-center justify-center border-l border-[#f8f8f8]"><svg class="h-[10px] w-[14px]"><use href="#chevd"/></svg></div>
      </div>
      <div class="ml-[5px] mt-px flex h-[22px] w-[306px] shrink-0 items-center border-b border-[#999] bg-[linear-gradient(#f9f9f9_0%,#f1f1f1_50%,#dfdfdf_55%,#d4d4d4_100%)] pl-[6px] text-[#1a1a50]">
        <span class="flex-1 pt-[2px]">操作</span>
        <div class="flex h-full w-[23px] items-center justify-center border-l border-[#f8f8f8]"><svg class="h-[10px] w-[14px]"><use href="#chevu"/></svg></div>
      </div>
      <div class="ml-[5px] flex h-[48px] w-[306px] shrink-0 items-center justify-center gap-[4px] border-x-2 border-[#bdbdbd] bg-[#d0d0d0] pr-[6px]">
        <div class="flex size-[30px] items-center justify-center rounded-[4px] border-2 border-[#606060] bg-[linear-gradient(#f6f6f6,#cfcfcf)]">
          <svg class="size-[24px]" viewBox="0 0 24 24"><path d="M6 1H11V18H6Z" fill="#3a48d0"/><path d="M12 4H24M12 8H21M12 12H18" stroke="#666" stroke-width="1.300"/><path d="M3 21L14 21M5 23L12 19M5 19L12 23" stroke="#e8d020"/></svg>
        </div>
        <div class="flex size-[30px] items-center justify-center rounded-[4px] border-2 border-[#e2e2e2] bg-[linear-gradient(#eaeaea,#cfcfcf)]">
          <svg class="size-[24px] text-[#a0a0a0]" viewBox="0 0 24 24"><use href="#zigzag" width="10" height="22"/><path d="M12 21C12 15 21 15 21 21M21 21L23 17M21 21L18 19" fill="none" stroke="#a0a0a0" stroke-width="1.400"/></svg>
        </div>
        <div class="flex size-[30px] items-center justify-center rounded-[4px] border-2 border-[#e2e2e2] bg-[linear-gradient(#eaeaea,#cfcfcf)]">
          <svg class="size-[24px]" viewBox="0 0 24 24"><path d="M2 14H22V23H2Z" fill="#b0a488"/><path d="M10 3H15V18H10Z" fill="#8a94b8"/><path d="M1 5L5 9L11 2" fill="none" stroke="#60a070" stroke-width="2.200"/></svg>
        </div>
        <div class="flex size-[30px] items-center justify-center rounded-[4px] border-2 border-[#e2e2e2] bg-[linear-gradient(#eaeaea,#cfcfcf)]">
          <svg class="size-[24px] text-[#a0a0a0]" viewBox="0 0 24 24"><use href="#zigzag" width="10" height="22"/><path d="M12 8H19L23 12V23H12Z" fill="#c4c4c4"/><path d="M16 1L20 6H13Z" fill="#c4a090"/></svg>
        </div>
      </div>
      <div class="ml-[5px] mt-px flex h-[22px] w-[306px] shrink-0 items-center border-b border-[#999] bg-[linear-gradient(#f9f9f9_0%,#f1f1f1_50%,#dfdfdf_55%,#d4d4d4_100%)] pl-[6px] text-[#1a1a50]">
        <span class="flex-1 pt-[2px]">预览</span>
        <div class="flex h-full w-[23px] items-center justify-center border-l border-[#f8f8f8]"><svg class="h-[10px] w-[14px]"><use href="#chevd"/></svg></div>
      </div>
      <div class="mt-[4px] flex h-[15px] w-[316px] shrink-0 items-center justify-center gap-[5px] border-b border-[#999] bg-[linear-gradient(#f6f6f6,#dcdcdc)]">
        <svg class="h-[7px] w-[11px]" viewBox="0 0 11 7"><path d="M1 6L5.500 1.500L10 6" fill="none" stroke="#111" stroke-width="2.200"/></svg>
        <svg class="h-[7px] w-[11px]" viewBox="0 0 11 7"><path d="M1 6L5.500 1.500L10 6" fill="none" stroke="#111" stroke-width="2.200"/></svg>
        <svg class="h-[7px] w-[11px]" viewBox="0 0 11 7"><path d="M1 6L5.500 1.500L10 6" fill="none" stroke="#111" stroke-width="2.200"/></svg>
      </div>
      <div class="mt-[3px] h-px w-[314px] shrink-0 bg-[#d0d0d0]"></div>
      <div class="mt-[6px] flex shrink-0 justify-end gap-[7px] pr-[11px]">
        <div class="flex h-[22px] w-[52px] items-center justify-center rounded-[4px] border border-[#3f7f3f] bg-[linear-gradient(#c8f0b0,#6cd060)]">确定</div>
        <div class="flex h-[22px] w-[52px] items-center justify-center rounded-[4px] border border-[#777] bg-[linear-gradient(#f6f6f6,#cdcdcd)]">取消</div>
      </div>
    </div>
  </div>
</div>

<script>
  // navigator rows: first three carry the tree, the rest are blank grid lines
  const rowsEl = document.getElementById("rows");
  const tree = [
    `<span class="ml-[4px] text-[13px]">NC_PROGRA</span>`,
    `<span class="ml-[10px] mt-[-8px] h-[10px] w-[10px] border-l border-t border-dotted border-[#4a7a4a]"></span><svg class="ml-px size-[14px]"><use href="#folder"/></svg><span class="ml-[4px]">未用项</span>`,
    `<span class="ml-[4px] flex size-[9px] items-center justify-center border border-[#777] text-[9px]">+</span><span class="h-px w-[6px] border-t border-dotted border-[#4a7a4a]"></span><svg class="size-[14px]" viewBox="0 0 14 14"><circle cx="7" cy="7" r="5.500" fill="#fff" stroke="#c81818" stroke-width="2.200"/><path d="M3 11L11 3" stroke="#c81818" stroke-width="2.200"/></svg><svg class="ml-[2px] size-[14px]"><use href="#folder"/></svg><span class="ml-[4px]">A</span>`
  ];
  for (let i = 0; i < 26; i++) {
    const row = document.createElement("div");
    row.className = "flex h-[20px] shrink-0 border-b border-[#e8e8e8]";
    row.innerHTML = `
      <div class="flex w-[200px] items-center whitespace-nowrap border-r border-black">${tree[i] || ""}</div>
      <div class="w-[43px] border-r border-[#e8e8e8]"></div>
      <div class="w-[39px] border-r border-[#e8e8e8]"></div>
      <div class="w-[58px] border-r border-[#e8e8e8]"></div>`;
    rowsEl.appendChild(row);
  }

  // stray points of the cut path, colour then x,y pairs measured on a 3x crop at (440,280)
  const points = {
    "#b05a88": [61,4,127,4,82,133,274,133,319,151,391,214,85,208],
    "#9aa0a8": [178,34,196,58],
    "#c8c848": [157,100,160,97,241,91,145,187,265,181,256,193,337,187,62,193,64,193,178,229],
    "#70c0c8": [31,100,100,154],
    "#50c860": [223,247,415,247,367,265,364,274,172,274,172,283,241,283,493,283,160,292,181,307,295,310,490,310,226,325,319,343,478,346],
    "#6b8070": [271,361,466,361,265,373,268,382,316,385,397,382,580,370,589,382,76,382,85,403,130,421,322,421,352,406,391,406,580,418,421,436,382,442,454,442,469,442,475,445,577,442,685,436,19,457,25,460,37,463,43,469,49,472,367,457,478,454,478,463,484,466,478,472,676,466,172,478,217,481,388,478,394,478,400,478,412,481,424,478,472,478,493,478,688,481,376,496,451,502,775,496,256,502,226,517,484,514,676,514,361,523,325,532,517,532,589,532,784,529,781,532,347,550,115,553,121,556,133,559,139,562,145,568,148,577,148,586,382,559,382,568,376,574,316,577,484,574,490,574,496,574,520,574,568,574,577,550,580,562,577,568,589,577,784,577,901,565,580,610,265,619,148,619,457,619,973,613],
    "#c87868": [358,538,373,538,379,541,379,547,382,550,478,538,550,538,571,541,571,547,850,538,277,592,304,586,352,598,472,592,676,592,871,592,883,589,940,592,421,628,454,634,469,634,475,637,442,646,238,643,250,646,148,655,685,628,688,625,751,634,880,625,946,622,946,634,1012,634,1018,655,997,661,1054,661,805,661,388,670,394,670,400,670,424,670,472,670,688,673,1078,676,1099,679,205,682,400,682,376,688,775,688,787,685,844,688,979,685,1036,688,19,649,25,652,37,655,43,661,49,664],
    "#f0f0f0": [52,481,52,490,52,523,52,559,292,574,298,574,301,574,304,574,328,574,1171,715,1066,811,13,871,13,910,13,943],
    "#30d0e0": [565,538,52,601,52,640,52,679,52,703,475,643,478,655,478,664],
    "#8a8a78": [148,697,361,715,157,724,148,736,142,739,334,739,346,742,52,715,52,736,52,751,40,766,106,763,148,775,304,778,28,799,52,793,148,799,43,820,61,820,253,820,52,832,148,832,238,835,16,838,136,862,202,859,52,871,52,895,124,895,139,916,157,916,52,928,112,934,40,958,106,955,784,721,850,718,850,730,877,709,1042,718,1069,709,1117,697,1132,697,1156,712,1162,715,1177,721,915,730,1108,730,901,757,919,751,958,757,1111,751,1147,757,982,772,1003,775,883,781,940,784,1021,793,1036,793,1171,772,1195,775,1210,793,1228,793,946,814,973,805,1060,808,1075,814,1081,817,1252,808,1258,811,1267,814,1273,817,1012,826,1018,847,1054,853,1078,868,1099,871,1117,889,1132,889,1156,904,1162,907,1171,910,1177,913]
  };
  const canvas = document.getElementById("canvas");
  for (const colour in points) {
    const list = points[colour];
    for (let i = 0; i < list.length; i += 2) {
      const dot = document.createElementNS("http://www.w3.org/2000/svg", "rect");
      dot.setAttribute("x", 440 + Math.floor(list[i] / 3));
      dot.setAttribute("y", 280 + Math.floor(list[i + 1] / 3));
      dot.setAttribute("width", 1);
      dot.setAttribute("height", 1);
      dot.setAttribute("fill", colour);
      canvas.appendChild(dot);
    }
  }
</script>
</body>
</html>
